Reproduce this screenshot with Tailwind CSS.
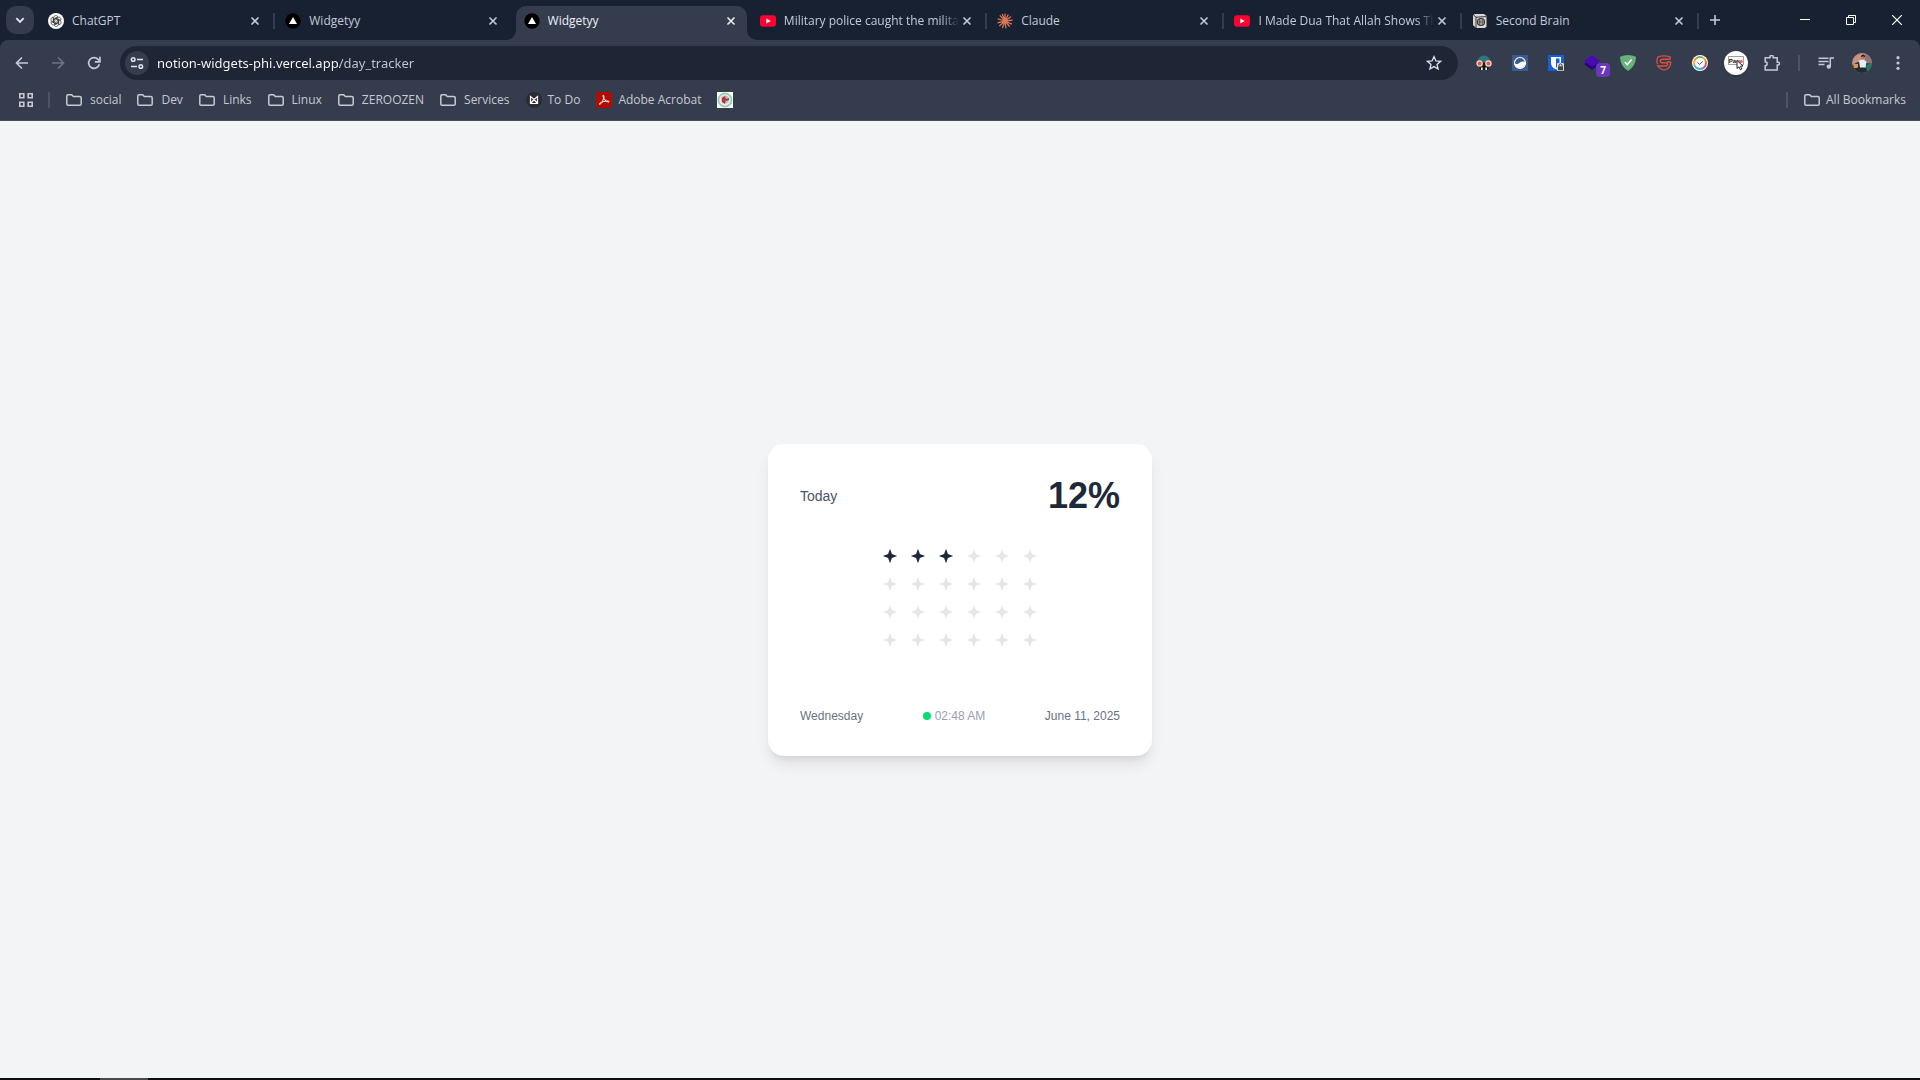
<!DOCTYPE html>
<html lang="en">
<head>
<meta charset="utf-8">
<meta name="viewport" content="width=device-width, initial-scale=1">
<title>Widgetyy</title>
<script src="https://cdn.jsdelivr.net/npm/@tailwindcss/browser@4"></script>
</head>
<body class="flex h-screen flex-col overflow-hidden bg-[#f3f4f6] font-['Open_Sans',sans-serif] text-xs text-[#c3cadb]">

<!-- Shared icon shapes -->
<svg class="hidden" aria-hidden="true">
  <symbol id="close" viewBox="0 0 16 16"><path d="M4.500 4.500l7 7M11.500 4.500l-7 7" fill="none" stroke="currentColor" stroke-width="1.600"/></symbol>
  <symbol id="folder" viewBox="0 0 16 16"><path d="M2 2.800h3.700l1.600 1.700h6.400q1.500 0 1.500 1.200v6.200q0 1.300-1.300 1.300H2q-1.200 0-1.200-1.300V3.900Q.8 2.800 2 2.800z" fill="none" stroke="currentColor" stroke-width="1.500"/></symbol>
  <symbol id="vercel" viewBox="0 0 16 16"><circle cx="8" cy="8" r="7.700" fill="#000"/><path d="M8 4l4 7H4z" fill="#fff"/></symbol>
  <symbol id="youtube" viewBox="0 0 16 16"><rect y="2.200" width="16" height="11.600" rx="3" fill="#ff0033"/><path d="M6.300 5.500L10.700 8l-4.400 2.500z" fill="#fff"/></symbol>
  <symbol id="star" viewBox="0 0 16 16"><path d="M8 .8L9.900 6.100 15.200 8 9.900 9.900 8 15.200 6.100 9.900.8 8 6.100 6.100z" fill="currentColor"/></symbol>
</svg>

<header class="shrink-0 bg-[#182131]">
  <!-- Tab strip -->
  <div class="flex h-10 items-center">
    <button class="ml-1.5 grid size-7 shrink-0 place-items-center rounded-[10px] bg-[#343c4d] text-[#dfe4ef]" aria-label="Search tabs">
      <svg class="size-4" viewBox="0 0 16 16"><path d="M4.300 6.200L8 9.900l3.700-3.700" fill="none" stroke="currentColor" stroke-width="1.900"/></svg>
    </button>
    <nav class="ml-1.5 grid h-full min-w-0 flex-1 grid-cols-7" aria-label="Tabs">
      <div class="flex min-w-0 items-center pt-[1px] pl-2">
        <svg class="size-4 shrink-0" viewBox="0 0 16 16"><circle cx="8" cy="8" r="8" fill="#fff"/><g fill="none" stroke="#333" stroke-width=".7"><path id="petal" d="M5.600 4.800V9.500L8.200 11M5.600 4.800a2.300 2.300 0 0 1 4.300-1.100L6.800 5.500V8"/><use href="#petal" transform="rotate(60 8 8)"/><use href="#petal" transform="rotate(120 8 8)"/><use href="#petal" transform="rotate(180 8 8)"/><use href="#petal" transform="rotate(240 8 8)"/><use href="#petal" transform="rotate(300 8 8)"/></g></svg>
        <a href="#" class="ml-2 min-w-0 flex-1 overflow-hidden whitespace-nowrap">ChatGPT</a>
        <button class="mr-2.5 shrink-0" aria-label="Close ChatGPT"><svg class="size-4"><use href="#close"/></svg></button>
        <span class="h-4 w-0.5 shrink-0 bg-[#343c4d]"></span><span class="w-0.5 shrink-0"></span>
      </div>
      <div class="flex min-w-0 items-center pt-[1px] pl-2">
        <svg class="size-4 shrink-0"><use href="#vercel"/></svg>
        <a href="#" class="ml-2 min-w-0 flex-1 overflow-hidden whitespace-nowrap">Widgetyy</a>
        <button class="mr-3.5 shrink-0" aria-label="Close Widgetyy"><svg class="size-4"><use href="#close"/></svg></button>
      </div>
      <div class="relative min-w-0 pt-1.5">
        <div class="ml-[1px] mr-[5px] flex h-[34px] items-center rounded-t-[10px] bg-[#343c4d] pb-[5px] pl-2 text-[#eef1f8]">
          <svg class="size-4 shrink-0"><use href="#vercel"/></svg>
          <a href="#" class="ml-2 min-w-0 flex-1 overflow-hidden whitespace-nowrap" aria-current="page">Widgetyy</a>
          <button class="mr-2 shrink-0" aria-label="Close Widgetyy"><svg class="size-4"><use href="#close"/></svg></button>
        </div>
        <!-- Flared feet joining the active tab to the toolbar -->
        <svg class="absolute bottom-0 -left-[9px] size-2.5 text-[#343c4d]" viewBox="0 0 10 10"><path d="M10 0v10H0A10 10 0 0 0 10 0z" fill="currentColor"/></svg>
        <svg class="absolute right-[-5px] bottom-0 size-2.5 text-[#343c4d]" viewBox="0 0 10 10"><path d="M0 0v10h10A10 10 0 0 1 0 0z" fill="currentColor"/></svg>
      </div>
      <div class="flex min-w-0 items-center pt-[1px] pl-2">
        <svg class="size-4 shrink-0"><use href="#youtube"/></svg>
        <a href="#" class="ml-2 min-w-0 flex-1 overflow-hidden whitespace-nowrap mask-r-from-90%">Military police caught the milita</a>
        <button class="mr-2.5 shrink-0" aria-label="Close Military police"><svg class="size-4"><use href="#close"/></svg></button>
        <span class="h-4 w-0.5 shrink-0 bg-[#343c4d]"></span><span class="w-0.5 shrink-0"></span>
      </div>
      <div class="flex min-w-0 items-center pt-[1px] pl-2">
        <svg class="size-4 shrink-0" viewBox="0 0 16 16"><path d="M8 8V.5M8 8l3.300-6.500M8 8l6-4.500M8 8l7.600-.8M8 8l6.800 3.200M8 8l4.600 5.500M8 8l1 7.500M8 8l-2.500 7M8 8l-5.700 5M8 8L.600 9.800M8 8L.700 5.800M8 8L2.800 2.400M8 8L5.200.900" stroke="#d97757" stroke-width="1.300"/></svg>
        <a href="#" class="ml-2 min-w-0 flex-1 overflow-hidden whitespace-nowrap">Claude</a>
        <button class="mr-2.5 shrink-0" aria-label="Close Claude"><svg class="size-4"><use href="#close"/></svg></button>
        <span class="h-4 w-0.5 shrink-0 bg-[#343c4d]"></span><span class="w-0.5 shrink-0"></span>
      </div>
      <div class="flex min-w-0 items-center pt-[1px] pl-2">
        <svg class="size-4 shrink-0"><use href="#youtube"/></svg>
        <a href="#" class="ml-2 min-w-0 flex-1 overflow-hidden whitespace-nowrap mask-r-from-90%">I Made Dua That Allah Shows Th</a>
        <button class="mr-2.5 shrink-0" aria-label="Close I Made Dua"><svg class="size-4"><use href="#close"/></svg></button>
        <span class="h-4 w-0.5 shrink-0 bg-[#343c4d]"></span><span class="w-0.5 shrink-0"></span>
      </div>
      <div class="flex min-w-0 items-center pt-[1px] pl-2">
        <svg class="size-4 shrink-0" viewBox="0 0 16 16"><path d="M1 2.500L2.500 1H12l2.500 2v10.500L13 15H4l-3-3z" fill="#d8d6cf"/><path d="M1.500 2L4 4.200V15M4 4.200L14.500 3.600" fill="none" stroke="#333" stroke-width="1"/><circle cx="9" cy="9" r="3.500" fill="none" stroke="#333" stroke-width="1.200"/><path d="M9 5v8M5.500 9h7M7.500 6v6M10.700 6v6" stroke="#444" stroke-width=".8"/></svg>
        <a href="#" class="ml-2 min-w-0 flex-1 overflow-hidden whitespace-nowrap">Second Brain</a>
        <button class="mr-2.5 shrink-0" aria-label="Close Second Brain"><svg class="size-4"><use href="#close"/></svg></button>
        <span class="h-4 w-0.5 shrink-0 bg-[#343c4d]"></span><span class="w-0.5 shrink-0"></span>
      </div>
    </nav>
    <button class="mr-[53px] grid size-7 shrink-0 place-items-center" aria-label="New tab"><svg class="size-3" viewBox="0 0 12 12"><path d="M6 1v10M1 6h10" stroke="currentColor" stroke-width="1.600"/></svg></button>
    <button class="grid h-full w-[46px] shrink-0 place-items-center text-white" aria-label="Minimize"><svg class="size-2.5" viewBox="0 0 10 10"><path d="M0 4.500h10" stroke="currentColor"/></svg></button>
    <button class="grid h-full w-[46px] shrink-0 place-items-center text-white" aria-label="Restore"><svg class="size-2.5" viewBox="0 0 10 10"><path d="M.5 2.500h7v7h-7zM2.500 2.500v-2h7v7h-2" fill="none" stroke="currentColor"/></svg></button>
    <button class="grid h-full w-[46px] shrink-0 place-items-center text-white" aria-label="Close window"><svg class="size-2.5" viewBox="0 0 10 10"><path d="M0 0l10 10M10 0L0 10" stroke="currentColor" stroke-width="1.200"/></svg></button>
  </div>

  <div class="rounded-t-[8px] border-b border-[#454c5b] bg-[#343c4d]">
    <!-- Toolbar -->
    <div class="flex h-[46px] items-center px-1">
      <button class="grid size-9 place-items-center" aria-label="Back"><svg class="size-4" viewBox="0 0 16 16"><path d="M14 8H3M8 2.500L2.500 8 8 13.500" fill="none" stroke="currentColor" stroke-width="1.700"/></svg></button>
      <button class="grid size-9 place-items-center text-[#6c7485]" aria-label="Forward"><svg class="size-4" viewBox="0 0 16 16"><path d="M2 8h11M8 2.500L13.500 8 8 13.500" fill="none" stroke="currentColor" stroke-width="1.700"/></svg></button>
      <button class="grid size-9 place-items-center" aria-label="Reload"><svg class="size-4" viewBox="0 0 16 16"><path d="M13.300 9.200A5.400 5.400 0 1 1 12 4.300L13.500 6" fill="none" stroke="currentColor" stroke-width="1.700"/><path d="M13.900 1.800v5.100H8.800" fill="none" stroke="currentColor" stroke-width="1.700"/></svg></button>
      <div class="mx-2 flex h-[34px] min-w-0 flex-1 items-center rounded-full bg-[#1e2636] pl-[5px] pr-4">
        <button class="grid size-6 shrink-0 place-items-center rounded-full bg-[#343c4d] text-[#dfe4ef]" aria-label="Site information"><svg class="size-4" viewBox="0 0 16 16" fill="none" stroke="currentColor" stroke-width="1.500"><circle cx="4.200" cy="4.500" r="1.800"/><path d="M8 4.500h6M2 11.500h6"/><circle cx="11.800" cy="11.500" r="1.800"/></svg></button>
        <input type="text" aria-label="Address" value="notion-widgets-phi.vercel.app/day_tracker" class="ml-2 min-w-0 flex-1 bg-[linear-gradient(90deg,#ffffff_183px,#c5c9d3_183px)] bg-clip-text pt-0.5 font-['Noto_Sans',sans-serif] text-[13px] text-transparent outline-none">
        <button class="shrink-0" aria-label="Bookmark this tab"><svg class="size-4" viewBox="0 0 16 16"><path d="M8 1.600l1.900 4.300 4.700.4-3.600 3.100 1.100 4.600L8 11.600 3.900 14 5 9.400 1.400 6.300l4.700-.4z" fill="none" stroke="#dfe1e6" stroke-width="1.300"/></svg></button>
      </div>
      <button class="grid size-9 place-items-center" aria-label="Spy glasses extension"><svg class="size-4" viewBox="0 0 16 16"><path d="M1.500 7Q2.500.5 8 .5T14.500 7z" fill="#2f7480"/><path d="M2.500 8h11l-1.500 7H4z" fill="#17191d"/><path d="M5 12.500h1.700V15H5zM9.300 12.500H11V15H9.300z" fill="#e9eaed"/><circle cx="3.600" cy="8.500" r="2.600" fill="#e35a42" stroke="#f6d8cb" stroke-width="1.300"/><circle cx="12.400" cy="8.500" r="2.600" fill="#e35a42" stroke="#f6d8cb" stroke-width="1.300"/></svg></button>
      <button class="grid size-9 place-items-center" aria-label="Wave extension"><svg class="size-4" viewBox="0 0 16 16"><path d="M0 0h16v16H0z" fill="#3c5b8c"/><circle cx="8" cy="8" r="5.500" fill="#3c5b8c" stroke="#fff" stroke-width="1.200"/><path d="M2.500 8.500q2.800 1.500 5.200-.7t5.500-1A5.400 5.400 0 0 1 2.500 8.500z" fill="#fff"/></svg></button>
      <button class="grid size-9 place-items-center" aria-label="Password manager"><svg class="size-4" viewBox="0 0 16 16"><path d="M0 0h16v16H0z" fill="#175ddc"/><path d="M3 2h10v6q0 4-5 6.500Q3 12 3 8z" fill="#fff"/><path d="M8 3.500h3.500V8q0 3-3.500 4.800z" fill="#175ddc"/><rect x="9" y="8" width="7" height="8" rx="1" fill="#dedede"/><path d="M11 11.500v-1.300q0-1.300 1.500-1.300T14 10.200v1.300" fill="none" stroke="#444"/><path d="M10 11.300h5v4h-5z" fill="#444"/></svg></button>
      <button class="relative grid size-9 place-items-center" aria-label="Stack extension, 7 items"><svg class="size-4" viewBox="0 0 16 16"><path d="M0 9l8-5 8 5-8 6z" fill="#260579"/><path d="M0 6l8-6 8 6-8 6z" fill="#4a0ab3"/></svg><span class="absolute right-0 bottom-1 grid h-3.5 w-3.5 place-items-center rounded-[4px] bg-[#6a37bd] text-[10px] leading-none font-bold text-white">7</span></button>
      <button class="grid size-9 place-items-center" aria-label="Ad blocker"><svg class="size-4" viewBox="0 0 16 16"><path d="M8 0q4 0 8 1.800Q16 11 8 16 0 11 0 1.800 4 0 8 0z" fill="#67b279"/><path d="M4.800 7l2.600 2.600 4.200-5" fill="none" stroke="#fff" stroke-width="1.500"/></svg></button>
      <button class="grid size-9 place-items-center" aria-label="S shield extension"><svg class="size-4" viewBox="0 0 16 16"><path d="M14.300 4.300V2.200Q8-.400 1.700 2.200q-1.500 3.300-.2 7M1.200 10.500Q3.500 14 8 15.200q7-2.200 6.800-8.400" fill="none" stroke="#d9513f" stroke-width="1.300"/><path d="M14.300 4.300H6.500Q4.300 4.300 4.300 6t2.200 1.700h3.300q1.800 0 1.800 1.600t-1.800 1.600H1.200M14.800 6.900H11" fill="none" stroke="#d9513f" stroke-width="1.500"/></svg></button>
      <button class="grid size-9 place-items-center" aria-label="Clock extension"><span class="grid size-4 place-items-center rounded-full bg-white"><span class="grid size-3.5 place-items-center rounded-full bg-[conic-gradient(#48b66a,#f2b92e,#ec5645,#b857b0,#35b8c9,#3bb8dd,#f2b92e,#f2902e,#48b66a)]"><svg class="size-2.5" viewBox="0 0 10 10"><circle cx="5" cy="5" r="5" fill="#fff"/><path d="M2.500 4.500l2 1.800L7.800 3.500" fill="none" stroke="#444" stroke-width=".9"/></svg></span></span></button>
      <button class="grid size-9 place-items-center" aria-label="Page cursor extension"><svg class="size-6 rounded-full bg-white shadow-sm" viewBox="0 0 24 24"><path d="M4.500 5.500h15v8h-15z" fill="#fff" stroke="#777" stroke-width=".7"/><text x="4.800" y="11.500" font-family="Liberation Sans" font-size="6" font-weight="700" fill="#111">Pa<tspan fill="#e01818">ge</tspan></text><path d="M13 9.500v8l2-1.700 1.300 2.900 1.500-.7-1.300-2.800 2.500-.2z" fill="#fff" stroke="#111" stroke-width=".9"/></svg></button>
      <button class="grid size-9 place-items-center" aria-label="Extensions"><svg class="size-4" viewBox="0 0 16 16"><path d="M1.200 2.700H6V1.600q0-1.100 1.600-1.100t1.600 1.100v1.100h4v4.600h1q1.300 0 1.300 1.300T14.200 9.900h-1V15h-12v-4.200q2-.2 2-2t-2-2z" fill="none" stroke="currentColor" stroke-width="1.500"/></svg></button>
      <span class="mx-2 h-4 w-0.5 shrink-0 bg-[#4c5568]"></span>
      <button class="grid size-9 place-items-center" aria-label="Media controls"><svg class="size-4" viewBox="0 0 16 16"><path d="M.5 3.200h10M.5 6.400h10M.5 9.600h6M12.300 12V3H16" fill="none" stroke="currentColor" stroke-width="1.500"/><circle cx="10.800" cy="11.600" r="2.200" fill="currentColor"/></svg></button>
      <button class="grid size-9 place-items-center" aria-label="Profile"><svg class="size-5 rounded-full" viewBox="0 0 20 20"><path d="M0 0h20v20H0z" fill="#c99180"/><path d="M13 0h7v12h-7z" fill="#8f7476"/><path d="M0 12l6-3 8 1 6 1v9H0z" fill="#26352f"/><path d="M14 12l6-2v8l-5 1z" fill="#257a68"/><path d="M1 11h5v4H2z" fill="#e09359"/><path d="M7 7.500l4-1 3.500 2L13.500 15H8z" fill="#e8edf3"/><path d="M5 14.500h8l2 5H4z" fill="#242a35"/><circle cx="11" cy="4.500" r="1.900" fill="#b47861"/><path d="M9 4.200q0-2.600 2.100-2.600t2 2.600l-2-1z" fill="#18171b"/></svg></button>
      <button class="grid size-9 place-items-center" aria-label="Browser menu"><svg class="size-4" viewBox="0 0 16 16" fill="currentColor"><circle cx="8" cy="2.700" r="1.600"/><circle cx="8" cy="8" r="1.600"/><circle cx="8" cy="13.300" r="1.600"/></svg></button>
    </div>

    <!-- Bookmarks bar -->
    <nav class="flex h-[34px] items-center pb-1.5 text-[#c7cad2]" aria-label="Bookmarks">
      <button class="ml-[18px] shrink-0" aria-label="Apps"><svg class="size-4" viewBox="0 0 16 16"><path d="M1.800 1.800h4v4h-4zM10.200 1.800h4v4h-4zM1.800 10.200h4v4h-4zM10.200 10.200h4v4h-4z" fill="none" stroke="currentColor" stroke-width="1.600"/></svg></button>
      <span class="mr-4 ml-3.5 h-4 w-0.5 shrink-0 bg-[#4c5568]"></span>
      <div class="flex min-w-0 flex-1 items-center gap-4 whitespace-nowrap">
        <a href="#" class="flex items-center gap-2"><svg class="size-4"><use href="#folder"/></svg>social</a>
        <a href="#" class="flex items-center gap-2"><svg class="size-4"><use href="#folder"/></svg>Dev</a>
        <a href="#" class="flex items-center gap-2"><svg class="size-4"><use href="#folder"/></svg>Links</a>
        <a href="#" class="flex items-center gap-2"><svg class="size-4"><use href="#folder"/></svg>Linux</a>
        <a href="#" class="flex items-center gap-2"><svg class="size-4"><use href="#folder"/></svg>ZEROOZEN</a>
        <a href="#" class="flex items-center gap-2"><svg class="size-4"><use href="#folder"/></svg>Services</a>
        <a href="#" class="flex items-center gap-1.5"><svg class="size-4" viewBox="0 0 16 16"><circle cx="8" cy="8" r="8" fill="#2b2b33"/><path d="M4.500 11.500v-7L8 7.500l3.500-3v7zM4.500 11.500L8 7.500l3.500 4" fill="none" stroke="#fff" stroke-width="1.200"/></svg>To Do</a>
        <a href="#" class="flex items-center gap-1.5"><svg class="size-4" viewBox="0 0 16 16"><rect width="16" height="16" rx="2.500" fill="#b30b00"/><path d="M3.500 12.300c1.500.3 4.600-5 4.400-8.300-.1-1.300-1.300-1-.8.500.6 2.200 2.800 5.300 5.300 5.600 1 0 .9-1-.4-1.100-2.500-.2-6.300.8-8.200 2.300-.5.500-.6.900-.3 1z" fill="none" stroke="#fff"/></svg>Adobe Acrobat</a>
        <a href="#" aria-label="Emblem bookmark"><svg class="size-4" viewBox="0 0 16 16"><path d="M0 0h16v16H0z" fill="#fff"/><circle cx="8" cy="8" r="6.600" fill="#f3e9e8" stroke="#8fd0b4" stroke-width="1.800"/><circle cx="8" cy="7.500" r="4" fill="#d7b7b8"/><path d="M5 6l3-2 1 3-1 5-3-2z" fill="#b8323c"/><path d="M9 7l3-1v2l-3 1z" fill="#39645a"/></svg></a>
      </div>
      <span class="mr-4 h-4 w-0.5 shrink-0 bg-[#4c5568]"></span>
      <a href="#" class="mr-3.5 flex shrink-0 items-center gap-1.5"><svg class="size-4"><use href="#folder"/></svg>All Bookmarks</a>
    </nav>
  </div>
</header>

<main class="grid min-h-0 flex-1 place-items-center bg-[#f3f4f6] font-['Liberation_Sans',Arial,sans-serif]">
  <section class="w-96 rounded-2xl bg-white p-8 shadow-lg">
    <div class="mb-8 flex items-center justify-between">
      <h1 class="text-sm text-[#4a5565]">Today</h1>
      <p class="text-4xl font-bold text-[#1e2939]">12%</p>
    </div>
    <div id="hours" class="mx-auto mb-15 grid w-fit grid-cols-6 gap-3"></div>
    <div class="flex items-center justify-between text-xs text-[#6a7282]">
      <span>Wednesday</span>
      <time class="flex items-center gap-1 text-[#99a1af]"><span class="size-2 rounded-full bg-[#05df72]"></span>02:48 AM</time>
      <span>June 11, 2025</span>
    </div>
  </section>
</main>

<footer class="h-0.5 shrink-0 bg-[#100e12] pl-[100px]"><div class="h-full w-12 bg-[#494949]"></div></footer>

<script>
  // One star per hour of the day; elapsed hours are dark.
  const hoursPassed = 3;
  document.getElementById('hours').innerHTML = Array.from({ length: 24 }, (_, i) =>
    `<svg class="${i < hoursPassed ? 'size-4 text-[#1e2939]' : 'size-4 text-[#e5e7eb]'}"><use href="#star"/></svg>`
  ).join('');
</script>
</body>
</html>
